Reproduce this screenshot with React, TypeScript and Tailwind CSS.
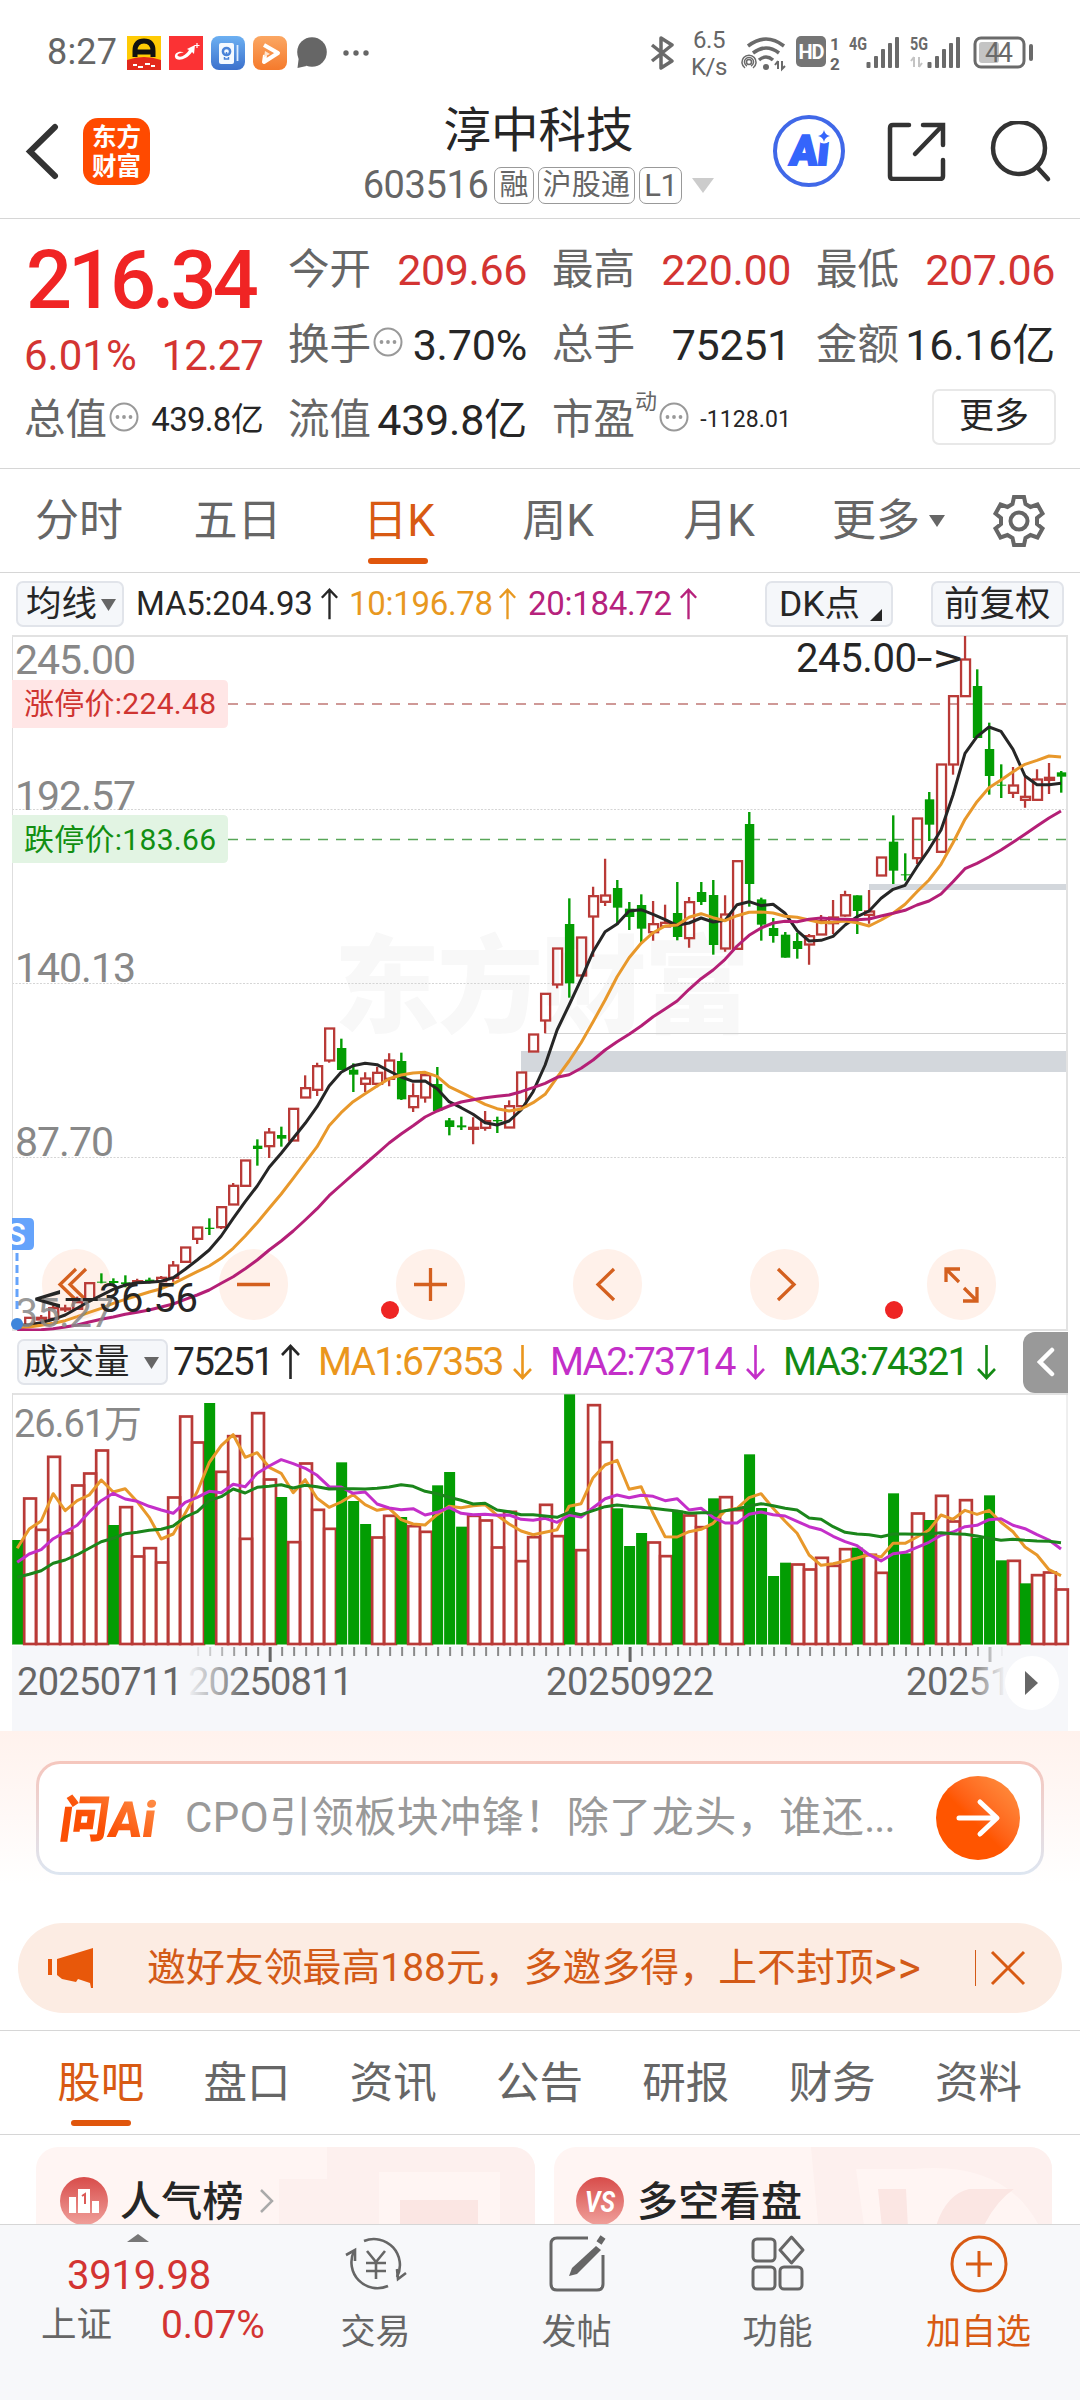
import { ReactNode } from 'react';

const RED = '#b93a37';
const GREEN = '#039d03';
const STEP = 11.998;
const FIRST_X = 17.2;

type Kind = 'r' | 'g';
// kind, high, body top, body bottom, low (thirds of a pixel)
type Candle = [Kind, number, number, number, number];

// lower left part of the chart, counted from y = 1000
const earlyCandles: Candle[] = [
  ['g', 960, 971, 974, 985],
  ['r', 951, 952, 975, 975],
  ['r', 945, 952, 957, 965],
  ['r', 916, 923, 955, 955],
  ['r', 914, 924, 927, 936],
  ['r', 890, 905, 925, 925],
  ['r', 848, 848, 898, 898],
  ['g', 820, 845, 847, 850],
  ['g', 835, 843, 849, 858],
  ['g', 826, 847, 852, 862],
  ['r', 836, 842, 845, 852],
  ['g', 833, 839, 843, 850],
  ['r', 828, 832, 842, 842],
  ['r', 783, 795, 832, 845],
  ['r', 741, 741, 784, 784],
  ['r', 681, 681, 715, 732],
  ['g', 655, 683, 687, 705],
  ['r', 620, 620, 680, 687],
  ['r', 549, 556, 612, 612],
  ['r', 480, 480, 556, 556],
  ['g', 418, 437, 447, 497],
  ['r', 384, 396, 437, 474],
  ['g', 380, 405, 416, 440],
  ['r', 325, 325, 420, 420],
  ['r', 226, 263, 291, 291],
  ['r', 188, 197, 268, 288],
  ['r', 84, 84, 180, 188],
  ['g', 116, 144, 210, 210],
  ['g', 190, 209, 224, 276],
  ['r', 217, 234, 250, 276],
  ['r', 200, 217, 250, 262],
  ['r', 160, 180, 235, 259],
  ['g', 158, 183, 298, 300],
  ['r', 250, 287, 320, 336],
  ['r', 224, 224, 291, 308],
  ['g', 201, 252, 333, 333],
  ['g', 354, 361, 381, 406],
  ['g', 350, 376, 382, 390],
  ['r', 352, 382, 384, 433],
  ['r', 333, 362, 382, 392],
  ['g', 350, 360, 364, 399],
  ['r', 301, 317, 381, 381],
  ['r', 216, 216, 317, 317],
  ['r', 102, 102, 153, 153],
  ['r', -20, -20, 60, 100],
];

// upper right part, counted from y = 620
const lateCandles: Candle[] = [
  ['r', 984, 984, 1092, 1105],
  ['g', 835, 912, 1090, 1133],
  ['r', 951, 951, 1065, 1065],
  ['r', 800, 827, 888, 1010],
  ['r', 716, 825, 844, 858],
  ['g', 780, 804, 863, 915],
  ['g', 846, 866, 891, 930],
  ['g', 823, 855, 926, 970],
  ['r', 843, 911, 935, 962],
  ['r', 854, 907, 918, 918],
  ['g', 786, 879, 951, 961],
  ['r', 831, 845, 953, 983],
  ['g', 786, 816, 846, 855],
  ['g', 780, 825, 975, 1004],
  ['r', 826, 882, 984, 995],
  ['r', 722, 722, 985, 985],
  ['g', 576, 612, 792, 860],
  ['g', 833, 838, 914, 962],
  ['g', 894, 924, 948, 968],
  ['g', 936, 944, 1013, 1013],
  ['g', 938, 963, 987, 1016],
  ['r', 942, 947, 972, 1034],
  ['r', 885, 902, 942, 945],
  ['r', 840, 891, 908, 942],
  ['r', 812, 824, 885, 890],
  ['g', 826, 826, 873, 942],
  ['r', 810, 873, 883, 911],
  ['r', 711, 711, 765, 765],
  ['g', 586, 665, 752, 792],
  ['g', 700, 763, 766, 782],
  ['r', 594, 594, 713, 732],
  ['g', 516, 538, 614, 663],
  ['r', 432, 432, 694, 694],
  ['r', 227, 227, 432, 464],
  ['r', 48, 117, 227, 227],
  ['g', 148, 198, 354, 354],
  ['g', 308, 387, 468, 524],
  ['g', 433, 494, 497, 534],
  ['r', 441, 495, 517, 534],
  ['r', 470, 529, 538, 563],
  ['r', 448, 477, 538, 543],
  ['r', 429, 472, 478, 522],
  ['g', 453, 457, 470, 518],
];

const candles = [
  ...earlyCandles.map(([k, ...v]) => ({ kind: k, v: v.map((n) => 1000 + n / 3) })),
  ...lateCandles.map(([k, ...v]) => ({ kind: k, v: v.map((n) => 620 + n / 3) })),
];

const joinHalves = (early: number[], late: number[]) => [
  ...early.map((n) => 1000 + n / 3),
  ...late.map((n) => 620 + n / 3),
];

const ma5 = joinHalves(
  [
    977, 974, 968, 958, 945, 925, 904, 886, 868, 855, 848, 847, 844, 833, 808, 780, 750, 708, 655, 605,
    558, 502, 460, 415, 370, 320, 258, 217, 197, 190, 194, 213, 231, 244, 243, 266, 305, 323, 343, 368,
    375, 363, 330, 275, 195,
  ],
  [
    1230, 1155, 1078, 995, 935, 912, 873, 869, 883, 899, 916, 909, 894, 906, 901, 854, 845, 857, 853, 880,
    932, 963, 961, 949, 915, 890, 873, 835, 808, 796, 740, 688, 630, 525, 400, 350, 321, 334, 388, 468,
    494, 494, 490,
  ],
);

const ma10 = joinHalves(
  [
    984, 981, 976, 970, 962, 950, 937, 925, 910, 898, 887, 876, 866, 851, 833, 815, 798, 775, 745, 708,
    668, 625, 582, 535, 487, 440, 377, 338, 305, 281, 258, 236, 225, 219, 217, 229, 260, 277, 295, 313,
    326, 333, 327, 308, 283,
  ],
  [
    1372, 1323, 1268, 1205, 1140, 1070, 1013, 970, 938, 918, 915, 892, 881, 893, 902, 887, 877, 876, 879,
    889, 892, 900, 908, 906, 903, 908, 918, 900, 880, 853, 815, 780, 733, 668, 598, 545, 503, 480, 455,
    433, 421, 408, 411,
  ],
);

const ma20 = joinHalves(
  [
    990, 990, 989, 986, 981, 975, 966, 958, 951, 943, 937, 930, 921, 912, 898, 885, 870, 850, 830, 806,
    780, 750, 723, 693, 660, 626, 587, 555, 523, 492, 461, 429, 402, 377, 351, 333, 318, 306, 299, 293,
    289, 285, 275, 263, 250,
  ],
  [
    1372, 1364, 1345, 1320, 1290, 1265, 1243, 1218, 1190, 1167, 1143, 1108, 1076, 1050, 1018, 978, 946,
    924, 909, 904, 905, 898, 894, 897, 898, 899, 897, 888, 880, 871, 855, 843, 822, 785, 746, 730, 711,
    690, 667, 643, 618, 594, 573,
  ],
);

const volumes =
  'g480 r354 r448 r229 r458 r315 r279 r210 g435 r380 r528 r503 r546 r351 r108 r186 g69 r274 r167 r475 r98 r297 ' +
  'g351 r485 r249 r388 r445 g247 g363 g432 r471 r406 g411 r437 r454 g316 g276 g440 r406 r420 r501 r394 r542 r470 ' +
  'r373 r467 g43 r509 r74 r185 g385 g498 g459 r486 r527 g392 r405 r440 g355 r350 r389 g223 g384 g588 g548 r552 ' +
  'r567 r532 r556 r506 g503 r523 r577 g340 g520 r399 g420 r346 r423 r359 g473 g346 g541 r541 g610 r584 r576 r627';

const volMa1 = [
  505, 447, 423, 341, 392, 362, 345, 300, 336, 326, 365, 412, 477, 462, 400, 335, 248, 197, 164, 232, 218,
  262, 280, 338, 299, 355, 382, 366, 344, 374, 391, 385, 419, 432, 435, 404, 379, 383, 377, 374, 406, 432,
  453, 464, 457, 449, 379, 371, 293, 255, 241, 328, 320, 400, 470, 471, 455, 448, 430, 392, 385, 353, 341,
  385, 424, 460, 525, 556, 551, 543, 534, 524, 531, 490, 490, 471, 450, 405, 418, 391, 403, 391, 427, 455,
  501, 525, 569, 587,
];
const volMa2 = [
  547, 522, 509, 476, 456, 436, 396, 362, 340, 357, 364, 379, 390, 400, 367, 352, 334, 338, 313, 320, 280,
  258, 239, 251, 265, 286, 320, 321, 340, 336, 372, 384, 389, 386, 405, 397, 382, 400, 404, 403, 406, 405,
  418, 421, 415, 427, 405, 411, 383, 356, 345, 353, 346, 349, 362, 356, 390, 385, 412, 429, 429, 403, 396,
  404, 408, 424, 440, 449, 469, 485, 497, 524, 543, 521, 517, 502, 487, 466, 456, 440, 436, 419, 416, 436,
  446, 464, 480, 507,
];
const volMa3 = [
  592, 583, 572, 550, 540, 524, 505, 485, 475, 461, 457, 451, 448, 438, 411, 395, 362, 350, 327, 339, 322,
  319, 314, 324, 316, 320, 327, 326, 326, 327, 325, 321, 314, 319, 334, 341, 352, 361, 372, 370, 390, 395,
  404, 404, 408, 412, 397, 404, 392, 380, 375, 379, 382, 385, 389, 393, 400, 398, 398, 392, 387, 378, 371,
  377, 385, 390, 414, 418, 440, 457, 462, 464, 470, 462, 462, 463, 462, 458, 461, 463, 468, 475, 481, 478,
  481, 483, 484, 488,
];

const xAt = (i: number) => FIRST_X + i * STEP;
const toPoints = (ys: number[]) => ys.map((y, i) => `${xAt(i).toFixed(1)},${y.toFixed(1)}`).join(' ');
const volY = (n: number) => 1380 + n / 3;

/* ---------- status bar ---------- */

const Signal = ({ label, arrows }: { label: string; arrows?: boolean }) => (
  <svg className="overflow-visible" width="52" height="36" viewBox="0 0 52 36" fill="#6a6a6a">
    <text x="0" y="15" fontSize="19" fontWeight="700" textLength="18" lengthAdjust="spacingAndGlyphs">
      {label}
    </text>
    {arrows && (
      <path d="M4 22v10M4 22l-3 4M9 22v10M9 32l3-4" stroke="#c4c4c4" strokeWidth="2" fill="none" />
    )}
    <rect x="17.500" y="27" width="4" height="6" rx="1" />
    <rect x="25" y="21" width="4" height="12" rx="1" />
    <rect x="32" y="14" width="4" height="19" rx="1" />
    <rect x="39" y="8" width="4" height="25" rx="1" />
    <rect x="46" y="2" width="4" height="31" rx="1" />
  </svg>
);

const StatusBar = () => (
  <div className="flex h-[88px] shrink-0 items-start pl-[47px] text-[#666]">
    <span className="mt-[31px] w-[80px] text-[36px] leading-[42px] tracking-[0.2px]">8:27</span>
    <div className="mt-[36px] flex gap-[8px]">
      <svg width="34" height="34" viewBox="0 0 34 34">
        <rect width="34" height="34" fill="#ffcb05" />
        <path d="M0 24q17-6 34 0v10H0z" fill="#e3291c" />
        <path d="M8 21v-6q0-10 9-10t9 10v6M10 16h14" stroke="#111" strokeWidth="5" fill="none" />
        <path d="M6 29h4m1 2h5m2-3h5m1 2h4" stroke="#fff" strokeWidth="2" />
      </svg>
      <svg width="34" height="34" viewBox="0 0 34 34">
        <rect width="34" height="34" fill="#fb3234" />
        <path
          d="M15 17c-4-3-10 0-9 4 1 5 12 3 17-5l2 2 1-9-8 4 2 1c-3 5-8 8-11 6-2-1 2-4 6-3z"
          fill="#fff"
        />
        <path d="M28 7v5M25.500 9.500h5" stroke="#fff" strokeWidth="1.200" />
      </svg>
      <svg width="34" height="34" viewBox="0 0 34 34">
        <defs>
          <linearGradient id="blueApp" x1="0" y1="0" x2="0" y2="1">
            <stop offset="0" stopColor="#6cb0f2" />
            <stop offset="1" stopColor="#3b70cc" />
          </linearGradient>
        </defs>
        <rect width="34" height="34" rx="8" fill="url(#blueApp)" />
        <rect x="8" y="7" width="15" height="21" rx="2" fill="#f4f9ff" />
        <circle cx="15.500" cy="15.500" r="3.600" fill="none" stroke="#4a83d8" strokeWidth="2.500" />
        <path d="M13.500 21v2h4v-2M15.500 16v4" stroke="#4a83d8" strokeWidth="1.500" fill="none" />
        <path d="M26.500 9v16" stroke="#dcebff" strokeWidth="1.800" />
      </svg>
      <svg width="34" height="34" viewBox="0 0 34 34">
        <defs>
          <linearGradient id="orangeApp" x1="0" y1="0" x2="0" y2="1">
            <stop offset="0" stopColor="#fba763" />
            <stop offset="1" stopColor="#f57a2c" />
          </linearGradient>
        </defs>
        <rect width="34" height="34" rx="8" fill="url(#orangeApp)" />
        <path d="M11 9l14 8-14 9 1-7" fill="none" stroke="#fff" strokeWidth="4" strokeLinejoin="round" />
        <path d="M12 15l5 3-6 3z" fill="#ffe3cc" />
      </svg>
    </div>
    <svg className="mt-[37px] ml-[9px]" width="32" height="33" viewBox="0 0 32 33" fill="#666">
      <circle cx="16" cy="15" r="14.800" />
      <path d="M3 19L1.500 31l9-2z" />
    </svg>
    <svg className="mt-[49px] ml-[15px]" width="28" height="8" fill="#666">
      <circle cx="3" cy="4" r="2.700" />
      <circle cx="13" cy="4" r="2.700" />
      <circle cx="23" cy="4" r="2.700" />
    </svg>
    <svg className="mt-[36px] ml-[279px]" width="26" height="34" viewBox="0 0 26 34">
      <path
        d="M2 9l20 16-11 7V2l11 7L2 25"
        fill="none"
        stroke="#6a6a6a"
        strokeWidth="3.500"
        strokeLinejoin="round"
      />
    </svg>
    <div className="mt-[27px] ml-[11px] w-[44px] text-center text-[24px] leading-[27px] tracking-[-0.5px]">
      6.5
      <br />
      K/s
    </div>
    <svg className="mt-[34px] ml-[10px]" width="46" height="38" viewBox="0 0 46 38" fill="none" stroke="#6a6a6a">
      <path d="M7 12q18-14 36 0" strokeWidth="3.500" />
      <path d="M12 19q13-10 26 0" strokeWidth="3.500" />
      <path d="M18 26q7-6 14 0" strokeWidth="3.500" />
      <circle cx="25" cy="33" r="3" fill="#6a6a6a" stroke="none" />
      <circle cx="8" cy="28" r="2.500" strokeWidth="1.500" />
      <path d="M4 34a7 7 0 1 1 8 0M6 32a4.500 4.500 0 1 1 4 0" strokeWidth="1.500" />
      <path d="M37 27v8M37 27l-3 4M41 27v8l3-3" strokeWidth="2" />
    </svg>
    <span className="mt-[36px] ml-[9px] flex h-[31px] w-[30px] items-center justify-center rounded-[5px] bg-[#757575] text-[20px] font-bold tracking-[-1px] text-white">
      HD
    </span>
    <div className="mt-[34px] ml-[4px] w-[10px] text-center text-[17px] leading-[20px] font-bold">
      1<br />2
    </div>
    <div className="mt-[35px] ml-[9px]">
      <Signal label="4G" />
    </div>
    <div className="mt-[35px] ml-[9px]">
      <Signal label="5G" arrows />
    </div>
    <svg className="mt-[36px] ml-[11px]" width="62" height="34" viewBox="0 0 62 34">
      <rect x="2" y="2" width="49" height="29" rx="6" fill="none" stroke="#6a6a6a" strokeWidth="3" />
      <rect x="6" y="6" width="20" height="21" rx="3" fill="#c4c4c4" />
      <rect x="56" y="8" width="4" height="17" rx="2" fill="#6a6a6a" />
      <text x="12" y="26" fontSize="27" fill="#6a6a6a" textLength="28">
        44
      </text>
    </svg>
  </div>
);

/* ---------- title ---------- */

const Tag = ({ children }: { children: ReactNode }) => (
  <span className="flex h-[37px] items-center rounded-[7px] border border-[#999] px-[4px] text-[29px] leading-none tracking-[0.2px]">
    {children}
  </span>
);

const Header = () => (
  <header className="flex h-[131px] shrink-0 border-b border-[#d6d6d6]">
    <svg className="mt-[35px] ml-[25px]" width="36" height="58" viewBox="0 0 36 58">
      <path d="M30 4L5 28.500 30 53" fill="none" stroke="#333" strokeWidth="6" strokeLinecap="round" />
    </svg>
    <div className="mt-[30px] ml-[22px] flex size-[67px] flex-col items-center justify-center rounded-[15px] bg-[#ff4a00] text-[24.500px] leading-[29px] font-bold text-white">
      <span>东方</span>
      <span>财富</span>
    </div>
    <div className="ml-[201px] flex w-[375px] flex-col items-center">
      <h1 className="mt-[12px] text-[47.500px] leading-[62px] text-[#262626]">淳中科技</h1>
      <div className="mt-[4px] flex h-[38px] items-center text-[#666]">
        <span className="mr-[6px] text-[38px] leading-none tracking-[-0.4px]">603516</span>
        <div className="flex gap-[4px]">
          <Tag>融</Tag>
          <Tag>沪股通</Tag>
          <Tag>
            <span className="text-[31px] tracking-[-0.5px]">L1</span>
          </Tag>
        </div>
        <svg className="ml-[10px]" width="22" height="15" fill="#ccc">
          <path d="M0 0h22L11 15z" />
        </svg>
      </div>
    </div>
    <svg className="mt-[26px] ml-[46px]" width="74" height="74" viewBox="0 0 74 74">
      <circle cx="37" cy="37" r="34" fill="none" stroke="#4068e8" strokeWidth="4" />
      <text
        x="22"
        y="51"
        fontSize="42"
        fontWeight="900"
        fill="#3565fb"
        stroke="#3565fb"
        strokeWidth="2"
        textLength="39"
        lengthAdjust="spacingAndGlyphs"
        transform="skewX(-6)"
      >
        Ai
      </text>
      <circle cx="52" cy="22" r="7.500" fill="#fff" />
      <path d="M52 16q1 5 6 6-5 1-6 6-1-5-6-6 5-1 6-6z" fill="#3565fb" />
    </svg>
    <svg
      className="mt-[33px] ml-[41px]"
      width="60"
      height="60"
      viewBox="0 0 60 60"
      fill="none"
      stroke="#333"
      strokeWidth="4.500"
      strokeLinecap="round"
    >
      <path d="M22 4H6q-3 0-3 3v48q0 3 3 3h47q3 0 3-3V39" />
      <path d="M36 4h20v20M55 5L28 33" />
    </svg>
    <svg
      className="mt-[33px] ml-[43px]"
      width="62"
      height="62"
      viewBox="0 0 62 62"
      fill="none"
      stroke="#333"
      strokeWidth="4.500"
      strokeLinecap="round"
    >
      <circle cx="29" cy="27" r="26" />
      <path d="M47 46l11 12" />
    </svg>
  </header>
);

/* ---------- quote ---------- */

const DotsIcon = () => (
  <svg width="30" height="30" viewBox="0 0 30 30" fill="#999">
    <circle cx="15" cy="15" r="13.500" fill="none" stroke="#999" strokeWidth="2" />
    <circle cx="8.500" cy="15" r="1.900" />
    <circle cx="15" cy="15" r="1.900" />
    <circle cx="21.500" cy="15" r="1.900" />
  </svg>
);

interface CellProps {
  label: string;
  value?: string;
  dots?: boolean;
  sup?: string;
  valueClass?: string;
}

const Cell = ({ label, value, dots, sup, valueClass = 'text-[43px] tracking-[-0.2px] text-[#262626]' }: CellProps) => (
  <div className="flex items-center justify-between pt-[2px] whitespace-nowrap">
    <span className="-ml-[2px] flex items-center text-[41.500px] leading-[50px] text-[#666]">
      {label}
      {sup && <sup className="-mt-[14px] text-[22px] leading-none">{sup}</sup>}
      {dots && (
        <span className="-mt-[6px] ml-[2px]">
          <DotsIcon />
        </span>
      )}
    </span>
    <span className={`leading-[50px] ${valueClass}`}>{value}</span>
  </div>
);

const Quote = () => (
  <section className="h-[250px] shrink-0 border-b border-[#d6d6d6] pt-[12px] pr-[25px] pl-[26px]">
    <div className="grid grid-cols-4 grid-rows-[75px_75px_75px] gap-x-[27px]">
      <div className="row-span-2 flex flex-col whitespace-nowrap">
        <div className="h-[98px] text-[81px] leading-[100px] font-medium tracking-[-4px] text-[#f02424]">216.34</div>
        <div className="-ml-[2px] flex justify-between text-[42px] leading-[54px] text-[#d33432]">
          <span>6.01%</span>
          <span className="tracking-[-0.8px]">12.27</span>
        </div>
      </div>
      <Cell label="今开" value="209.66" valueClass="text-[43px] tracking-[-0.4px] text-[#d33432]" />
      <Cell label="最高" value="220.00" valueClass="text-[43px] tracking-[-0.4px] text-[#d33432]" />
      <Cell label="最低" value="207.06" valueClass="text-[43px] tracking-[-0.4px] text-[#d33432]" />
      <Cell label="换手" value="3.70%" dots />
      <Cell label="总手" value="75251" valueClass="text-[43px] tracking-[-0.3px] text-[#262626]" />
      <Cell label="金额" value="16.16亿" />
      <Cell label="总值" value="439.8亿" dots valueClass="text-[33px] tracking-[-0.7px] text-[#262626]" />
      <Cell label="流值" value="439.8亿" />
      <Cell
        label="市盈"
        value="-1128.01"
        sup="动"
        dots
        valueClass="text-[23px] tracking-[0.1px] text-[#262626]"
      />
      <div className="flex justify-end">
        <button className="mt-[8px] -mr-[1px] h-[56px] w-[124px] rounded-[7px] border-2 border-[#e8e8e8] text-[35px] leading-[52px] text-[#262626]">
          更多
        </button>
      </div>
    </div>
  </section>
);

/* ---------- period tabs ---------- */

const periods = [
  { label: '分时', width: 'w-[158px]' },
  { label: '五日', width: 'w-[159px]' },
  { label: '日K', width: 'w-[164px]', active: true },
  { label: '周K', width: 'w-[154px]' },
  { label: '月K', width: 'w-[168px]' },
];

const PeriodTabs = () => (
  <nav className="flex h-[104px] shrink-0 border-b border-[#d6d6d6] text-[44px] leading-[104px] text-[#666]">
    {periods.map(({ label, width, active }) => (
      <div key={label} className={`relative shrink-0 text-center ${width} ${active ? 'text-[#d85a13]' : ''}`}>
        {label}
        {active && (
          <span className="absolute bottom-[8px] left-[51px] h-[6px] w-[60px] rounded-full bg-[#e0560c]" />
        )}
      </div>
    ))}
    <span className="ml-[29px]">更多</span>
    <svg className="mt-[46px] ml-[9px]" width="16" height="12" fill="#666">
      <path d="M0 0h16L8 12z" />
    </svg>
    <svg
      className="mt-[25px] ml-[47px]"
      width="54"
      height="54"
      viewBox="0 0 54 54"
      fill="none"
      stroke="#666"
      strokeWidth="4"
    >
      <path d="M22 3h10l1.500 7 5 3 7-2.500 5 9-5.500 4.500v6l5.500 4.500-5 9-7-2.500-5 3-1.500 7H22l-1.500-7-5-3-7 2.500-5-9L9 30v-6l-5.500-4.500 5-9 7 2.500 5-3z" />
      <circle cx="27" cy="27" r="8.500" />
    </svg>
  </nav>
);

/* ---------- charts ---------- */

const Arrow = ({ down = false, className = '' }: { down?: boolean; className?: string }) => (
  <svg className={className} width="19" height="36" viewBox="0 0 19 36" fill="none" stroke="currentColor" strokeWidth="2.600">
    {down ? <path d="M9.500 1v32M1 25l8.500 9 8.500-9" /> : <path d="M9.500 35V3M1 11l8.500-9 8.500 9" />}
  </svg>
);

const Pill = ({ children, className = '' }: { children: ReactNode; className?: string }) => (
  <span
    className={`flex h-[46px] shrink-0 items-center rounded-[7px] border-2 border-[#e1e4ea] bg-[#f5f7fa] pt-[1px] text-[35.500px] leading-none text-[#262626] ${className}`}
  >
    {children}
  </span>
);

const MaBar = () => (
  <div className="flex h-[62px] shrink-0 items-center pl-[16px] text-[33px] whitespace-nowrap text-[#262626]">
    <Pill className="w-[108px] pl-[8px]">
      均线
      <svg className="ml-[4px]" width="15" height="12" fill="#666">
        <path d="M0 0h15L7.500 12z" />
      </svg>
    </Pill>
    <span className="ml-[12px] w-[180px] tracking-[-0.2px]">MA5:204.93</span>
    <Arrow className="ml-[4px] scale-90" />
    <span className="ml-[10px] flex items-center text-[#e8981f]">
      <span className="w-[149px] tracking-[-0.3px]">10:196.78</span>
      <Arrow className="scale-90" />
    </span>
    <span className="ml-[11px] flex items-center text-[#b6227c]">
      <span className="w-[151px] tracking-[-0.3px]">20:184.72</span>
      <Arrow className="scale-90" />
    </span>
    <Pill className="ml-[67px] w-[128px] pl-[12px]">
      DK点
      <svg className="mt-[20px] ml-[10px]" width="12" height="12" fill="#262626">
        <path d="M12 0v12H0z" />
      </svg>
    </Pill>
    <Pill className="ml-[38px] w-[133px] pl-[11px]">前复权</Pill>
  </div>
);

const chartButtons = [
  <path d="M44 19L28 34.500 44 50M34 19L18 34.500 34 50" />,
  <path d="M18 34.500h33" />,
  <path d="M18 34.500h33M34.500 18v33" />,
  <path d="M41 19L25 34.500 41 50" />,
  <path d="M28 19l16 15.500L28 50" />,
  <path d="M19 32V19h14M19 19l13 13M37 38l13 13M50 37v14H36" />,
];

const PriceChart = () => (
  <div className="relative h-[696px] shrink-0">
    <div className="absolute inset-x-0 top-[614px] flex gap-[108px] pl-[42px]">
      {chartButtons.map((icon, i) => (
        <svg
          key={i}
          width="69"
          height="71"
          viewBox="0 0 69 69"
          fill="none"
          stroke="#d4601f"
          strokeWidth="3.300"
          className="shrink-0 rounded-full bg-[#fff1ea]"
        >
          {icon}
        </svg>
      ))}
    </div>
    <svg className="absolute inset-0" width="1080" height="696" viewBox="0 635 1080 696" fill="none">
      <text x="334" y="1024" fontSize="106" fontWeight="800" fill="#f8f8f8" textLength="416">
        东方财富
      </text>
      <g stroke="#d5d5d5" strokeWidth="1" strokeDasharray="2 1.500">
        <path d="M12 809.500H1067M12 983.500H1067M12 1157.500H1067" />
      </g>
      <path d="M545 1033.500H1067" stroke="#d2d2d2" />
      <rect x="521" y="1051" width="546" height="21" fill="#d3d7dc" />
      <rect x="869" y="884" width="198" height="6" fill="#d3d7dc" />
      <path d="M228 704H1067" stroke="#cf9997" strokeWidth="2" strokeDasharray="10 8" />
      <path d="M228 839.500H1067" stroke="#58a658" strokeWidth="1.500" strokeDasharray="10 8" />
      <path d="M12.500 635V1330" stroke="#dedede" />
      <path d="M12 636H1068M12 1330H1068M1067 635V1331" stroke="#e2e2e2" strokeWidth="2" />

      {candles.map(({ kind, v: [high, top, bottom, low] }, i) => {
        const x = xAt(i);
        const h = Math.max(bottom - top, 1);
        return kind === 'g' ? (
          <g key={i} fill={GREEN}>
            <rect x={x - 1} y={high} width="2.4" height={low - high} />
            <rect x={x - 4.2} y={top} width="9.4" height={h} />
          </g>
        ) : (
          <g key={i} stroke={RED} strokeWidth="2.3">
            <path d={`M${x} ${high}V${top}M${x} ${bottom}V${low}`} />
            <rect x={x - 4} y={top + 0.5} width="9" height={h} />
          </g>
        );
      })}

      <g strokeWidth="3" strokeLinejoin="round">
        <polyline points={toPoints(ma5)} stroke="#262626" />
        <polyline points={toPoints(ma10)} stroke="#e8982b" />
        <polyline points={toPoints(ma20)} stroke="#b41f76" />
      </g>

      <g fill="#888" fontSize="41">
        <text x="15" y="674" textLength="121">245.00</text>
        <text x="15" y="810" textLength="121">192.57</text>
        <text x="15" y="982" textLength="121">140.13</text>
        <text x="15" y="1156" textLength="99">87.70</text>
        <text x="15" y="1327" textLength="99" opacity="0.85">35.27</text>
      </g>
      <path d="M12 680H223q5 0 5 5v38q0 5-5 5H12z" fill="#ffe6e6" />
      <text x="24" y="714" fontSize="30" fill="#cf3431" textLength="192">
        涨停价:224.48
      </text>
      <path d="M12 815H223q5 0 5 5v38q0 5-5 5H12z" fill="#e2f4e3" />
      <text x="24" y="850" fontSize="30" fill="#128f12" textLength="192">
        跌停价:183.66
      </text>
      <g fill="#262626" fontSize="40">
        <text x="796" y="672">
          <tspan textLength="121">245.00</tspan>
          <tspan textLength="46" lengthAdjust="spacingAndGlyphs">
            {'->'}
          </tspan>
        </text>
        <text x="33" y="1312">
          <tspan textLength="66" lengthAdjust="spacingAndGlyphs">
            {'<--'}
          </tspan>
          <tspan textLength="99">36.56</tspan>
        </text>
      </g>
      <circle cx="390" cy="1310" r="9" fill="#ee2524" />
      <circle cx="894" cy="1310" r="9" fill="#ee2524" />
      <path d="M12 1218H29q5 0 5 5v22q0 5-5 5H12z" fill="#65a3fb" />
      <svg x="12" y="1218" width="22" height="32">
        <text x="-5" y="27" fontSize="31" fontWeight="500" fill="#fff">S</text>
      </svg>
      <path d="M17 1253V1310" stroke="#65a3fb" strokeWidth="3" strokeDasharray="8 4" />
      <circle cx="17" cy="1324" r="6" fill="#3f86dc" />
    </svg>
  </div>
);

const VolumeBar = () => (
  <div className="flex h-[62px] shrink-0 items-center pl-[17px] text-[39px] whitespace-nowrap">
    <Pill className="w-[151px] pl-[4px]">
      成交量
      <svg className="ml-[14px]" width="15" height="12" fill="#666">
        <path d="M0 0h15L7.500 12z" />
      </svg>
    </Pill>
    <div className="flex items-center pl-[5px] text-[#262626]">
      <span className="w-[108px] tracking-[-2px]">75251</span>
      <Arrow />
    </div>
    <div className="flex items-center pl-[18px] text-[#ea961d]">
      <span className="w-[195px] tracking-[-1.8px]">MA1:67353</span>
      <Arrow down />
    </div>
    <div className="flex items-center pl-[18px] text-[#c32fc8]">
      <span className="w-[196px] tracking-[-1.8px]">MA2:73714</span>
      <Arrow down />
    </div>
    <div className="flex items-center pl-[18px] text-[#148a14]">
      <span className="w-[194px] tracking-[-1.8px]">MA3:74321</span>
      <Arrow down />
    </div>
    <div className="ml-[27px] flex h-[61px] w-[45px] items-center justify-center rounded-l-[12px] bg-[#999]">
      <svg width="18" height="30" viewBox="0 0 18 30">
        <path d="M15 3L3 15l12 12" fill="none" stroke="#fff" strokeWidth="4.500" strokeLinecap="round" />
      </svg>
    </div>
  </div>
);

const VolumeChart = () => (
  <svg className="shrink-0" width="1080" height="338" viewBox="0 1393 1080 338" fill="none">
    <path d="M12 1394H1068" stroke="#e2e2e2" strokeWidth="2" />
    <path d="M12.500 1393V1645M1067 1393V1645" stroke="#dedede" />
    <text x="14" y="1437" fontSize="38" fill="#888" textLength="128">
      26.61万
    </text>
    {volumes.split(' ').map((bar, i) => {
      const y = volY(Number(bar.slice(1)));
      return bar[0] === 'g' ? (
        <rect key={i} x={xAt(i) - 5} y={y} width="11" height={1644.5 - y} fill={GREEN} />
      ) : (
        <rect key={i} x={xAt(i) - 5} y={y + 0.5} width="11.8" height={1643.5 - y} stroke={RED} strokeWidth="2.7" />
      );
    })}
    <g strokeWidth="3" strokeLinejoin="round">
      <polyline points={toPoints(volMa1.map(volY))} stroke="#e8982b" />
      <polyline points={toPoints(volMa2.map(volY))} stroke="#c42fc9" />
      <polyline points={toPoints(volMa3.map(volY))} stroke="#1b861b" />
    </g>

    {/* time axis */}
    <defs>
      <linearGradient id="fadeLeft">
        <stop offset="0" stopColor="#f6f7fa" />
        <stop offset="1" stopColor="#f6f7fa" stopOpacity="0" />
      </linearGradient>
      <linearGradient id="fadeRight">
        <stop offset="0" stopColor="#f6f7fa" stopOpacity="0" />
        <stop offset="1" stopColor="#f6f7fa" />
      </linearGradient>
    </defs>
    <rect x="12" y="1646" width="1056" height="85" fill="#f6f7fa" />
    {Array.from({ length: 68 }, (_, k) => k + 15).map((i) => (
      <rect
        key={i}
        x={xAt(i) + (i % 30 === 21 ? -0.5 : 0)}
        y="1647"
        width={i % 30 === 21 ? 3 : 2}
        height={i % 30 === 21 ? 15 : 9}
        fill={i % 30 === 21 ? '#666' : '#8a8a8a'}
      />
    ))}
    <g fill="#666" fontSize="38">
      <text x="188" y="1695" textLength="165">20250811</text>
      <text x="546" y="1695" textLength="168">20250922</text>
      <text x="906" y="1695" textLength="168">20251110</text>
      <rect x="186" y="1646" width="60" height="60" fill="url(#fadeLeft)" />
      <rect x="966" y="1646" width="40" height="60" fill="url(#fadeRight)" />
      <rect x="1006" y="1646" width="62" height="60" fill="#f6f7fa" />
      <rect x="1068" y="1646" width="12" height="60" fill="#fff" />
      <text x="17" y="1695" textLength="166">20250711</text>
    </g>
    <circle cx="1032" cy="1683" r="27" fill="#fff" />
    <path d="M1025 1671v24l13-12z" fill="#666" />
  </svg>
);

/* ---------- ask bar & promo ---------- */

const AskBar = () => (
  <section className="h-[192px] shrink-0 bg-linear-to-b from-[#fff2ed] via-[#fff9f7] via-45% to-white to-80% px-[36px] pt-[30px]">
    <div className="h-[114px] rounded-[24px] bg-linear-to-b from-[#f5c6bd] to-[#dde6f1] p-[3px]">
      <div className="flex h-full items-center rounded-[21px] bg-white">
        <svg className="ml-[16px] shrink-0" width="104" height="52" viewBox="0 0 104 52">
          <defs>
            <linearGradient id="askLogo" x1="0" y1="1" x2="1" y2="0">
              <stop offset="0.400" stopColor="#fb4f04" />
              <stop offset="1" stopColor="#ff9a55" />
            </linearGradient>
          </defs>
          <text
            x="9"
            y="45"
            fontSize="50"
            fontWeight="900"
            fill="url(#askLogo)"
            textLength="96"
            lengthAdjust="spacingAndGlyphs"
            transform="skewX(-8)"
          >
            问Ai
          </text>
        </svg>
        <span className="ml-[26px] text-[42px] leading-none whitespace-nowrap text-[#999]">
          <span className="tracking-[0.5px]">CPO引领板块冲锋！除了龙头，谁还</span>
          <span className="tracking-[-1px]">...</span>
        </span>
        <span className="mr-[21px] ml-auto flex size-[84px] shrink-0 items-center justify-center rounded-full bg-linear-to-tr from-[#ff5500] from-45% to-[#ff9544]">
          <svg
            width="46"
            height="42"
            viewBox="0 0 46 42"
            fill="none"
            stroke="#fff"
            strokeWidth="5"
            strokeLinecap="round"
            strokeLinejoin="round"
          >
            <path d="M4 21h37M25 5l17 16-17 16" />
          </svg>
        </span>
      </div>
    </div>
  </section>
);

const Promo = () => (
  <section className="h-[107px] shrink-0 px-[18px] text-[#d35a17]">
    <div className="flex h-[90px] items-center rounded-full bg-[#fcece3]">
      <svg className="ml-[29px]" width="48" height="42" viewBox="0 0 48 42" fill="#e8580a">
        <path d="M1 12h4v16H1zM10 12L46 1v40l-2 0-1-5-12-4-2 3-14-3-5-4z" />
      </svg>
      <span className="ml-[52px] flex items-center text-[38.900px] leading-[46px] whitespace-nowrap">
        邀好友领最高188元，多邀多得，上不封顶
        <span className="text-[44px] tracking-[1px]">&gt;&gt;</span>
      </span>
      <span className="ml-auto h-[36px] w-px bg-[#d35a17]" />
      <svg className="mr-[36px] ml-[14px]" width="36" height="36" viewBox="0 0 36 36">
        <path d="M2 2l32 32M34 2L2 34" stroke="#d85a13" strokeWidth="3" />
      </svg>
    </div>
  </section>
);

/* ---------- info tabs & cards ---------- */

const InfoTabs = () => (
  <nav className="flex h-[105px] shrink-0 border-y border-[#d6d6d6] pl-[27.500px] text-[43.500px] leading-[106px] text-[#666]">
    {['股吧', '盘口', '资讯', '公告', '研报', '财务', '资料'].map((label, i) => (
      <div key={label} className={`relative w-[146.300px] text-center ${i === 0 ? 'text-[#d85a13]' : ''}`}>
        {label}
        {i === 0 && (
          <span className="absolute bottom-[8px] left-[43px] h-[6px] w-[60px] rounded-full bg-[#e0560c]" />
        )}
      </div>
    ))}
  </nav>
);

const Cards = () => (
  <section className="flex h-[89px] shrink-0 gap-[19px] overflow-hidden pt-[12px] pl-[36px] text-[41px] font-medium text-[#262626]">
    <div className="relative h-[120px] w-[499px] overflow-hidden rounded-[22px] bg-[#fff5f3]">
      <svg className="absolute inset-0" width="499" height="120">
        <path d="M291 0h208v120H243V32h48z" fill="#fdf0ee" />
        <path d="M343 25h121v95H343z" fill="#fff5f3" />
        <path d="M364 53h78v67h-78z" fill="#fbe6e3" />
      </svg>
      <div className="relative mt-[24px] flex items-center pl-[24px]">
        <svg width="48" height="48" viewBox="0 0 48 48">
          <defs>
            <linearGradient id="badge" x1="0" y1="0" x2="0" y2="1">
              <stop offset="0" stopColor="#d84c4a" />
              <stop offset="1" stopColor="#f0a09b" />
            </linearGradient>
          </defs>
          <circle cx="24" cy="24" r="24" fill="url(#badge)" />
          <path d="M9 20h7v16H9zM18 12h12v24H18zM32 24h7v12h-7z" fill="#fff" />
          <path d="M22 19l3-2v10" stroke="#dc5a57" strokeWidth="2" fill="none" />
        </svg>
        <span className="mt-[2px] ml-[12px] leading-[58px] tracking-[0.3px]">人气榜</span>
        <svg className="ml-[15px]" width="15" height="24" viewBox="0 0 15 24">
          <path d="M2 1l11 11L2 23" fill="none" stroke="#aaa" strokeWidth="2.500" />
        </svg>
      </div>
    </div>
    <div className="relative h-[120px] w-[498px] overflow-hidden rounded-[22px] bg-[#fff5f3]">
      <svg className="absolute inset-0" width="498" height="120">
        <path d="M257 0h241v120H268z" fill="#fdf0ee" />
        <path d="M302 22l14 98h56l-12-98zM360 22q90-8 124 55l-20 15q-20-28-50 28h-42z" fill="#fff5f3" />
        <path d="M324 42h28l4 78h-24zM375 120q5-70 40-78h45q-30 20-45 78z" fill="#fbe6e3" />
      </svg>
      <div className="relative mt-[24px] flex items-center pl-[22px]">
        <svg width="48" height="48" viewBox="0 0 48 48">
          <circle cx="24" cy="24" r="24" fill="url(#badge)" />
          <text
            x="9"
            y="35"
            fontSize="30"
            fontWeight="700"
            fontStyle="italic"
            fill="#fff"
            textLength="30"
            lengthAdjust="spacingAndGlyphs"
          >
            VS
          </text>
        </svg>
        <span className="mt-[3px] ml-[13px] leading-[57px] tracking-[0.3px]">多空看盘</span>
      </div>
    </div>
  </section>
);

/* ---------- bottom bar ---------- */

const NavItem = ({ label, className = '', children }: { label: string; className?: string; children: ReactNode }) => (
  <div className={`flex w-[201px] shrink-0 flex-col items-center pt-[8px] ${className}`}>
    <svg width="64" height="62" viewBox="0 0 64 62" fill="none" stroke="currentColor" strokeWidth="3">
      {children}
    </svg>
    <span className="mt-[12px] text-[35px] leading-[52px]">{label}</span>
  </div>
);

const BottomBar = () => (
  <footer className="flex h-[176px] shrink-0 border-t border-[#d6d6d6] bg-[#f7f8fa] text-[#666]">
    <div className="w-[275px] shrink-0">
      <svg className="mt-[9px] ml-[127px]" width="22" height="8" fill="#777">
        <path d="M11 0l11 8H0z" />
      </svg>
      <div className="mt-[8px] ml-[3px] text-center text-[40px] leading-[52px] tracking-[-0.2px] text-[#d33432]">3919.98</div>
      <div className="mt-[-2px] flex items-center pl-[41px] leading-[50px]">
        <span className="text-[35.500px]">上证</span>
        <span className="ml-[49px] text-[39px] tracking-[-0.2px] text-[#d33432]">0.07%</span>
      </div>
    </div>
    <NavItem label="交易">
      <path d="M20 8A26 26 0 0 1 53 44M44 53A26 26 0 0 1 10 18" strokeWidth="2.600" />
      <path d="M2 22l9-5v11M62 40l-8 6-1-10" strokeWidth="2.600" />
      <path d="M23 18l9 11 9-11M32 29v17M22 30h20M22 38h20" strokeWidth="2.600" />
    </NavItem>
    <NavItem label="发帖">
      <path d="M43 5H12q-6 0-6 6v40q0 6 6 6h40q6 0 6-6V22" />
      <path d="M51 13l5 4-24 24-8 2 3-8z" fill="currentColor" stroke="none" />
      <path d="M54 10l4-6" strokeWidth="6" />
    </NavItem>
    <NavItem label="功能">
      <rect x="7" y="6" width="22" height="22" rx="4" />
      <rect x="7" y="34" width="22" height="22" rx="4" />
      <rect x="34" y="34" width="22" height="22" rx="4" />
      <path d="M45.500 4l11.500 13-11.500 13L34 17z" strokeLinejoin="round" />
    </NavItem>
    <NavItem label="加自选" className="text-[#d85a13]">
      <circle cx="32" cy="31" r="27" />
      <path d="M19 31h26M32 18v26" />
    </NavItem>
  </footer>
);

export default function App() {
  return (
    <main className="flex h-[2400px] w-[1080px] flex-col overflow-hidden bg-white font-['Roboto','Noto_Sans_CJK_SC',sans-serif]">
      <StatusBar />
      <Header />
      <Quote />
      <PeriodTabs />
      <MaBar />
      <PriceChart />
      <VolumeBar />
      <VolumeChart />
      <AskBar />
      <Promo />
      <InfoTabs />
      <Cards />
      <BottomBar />
    </main>
  );
}
